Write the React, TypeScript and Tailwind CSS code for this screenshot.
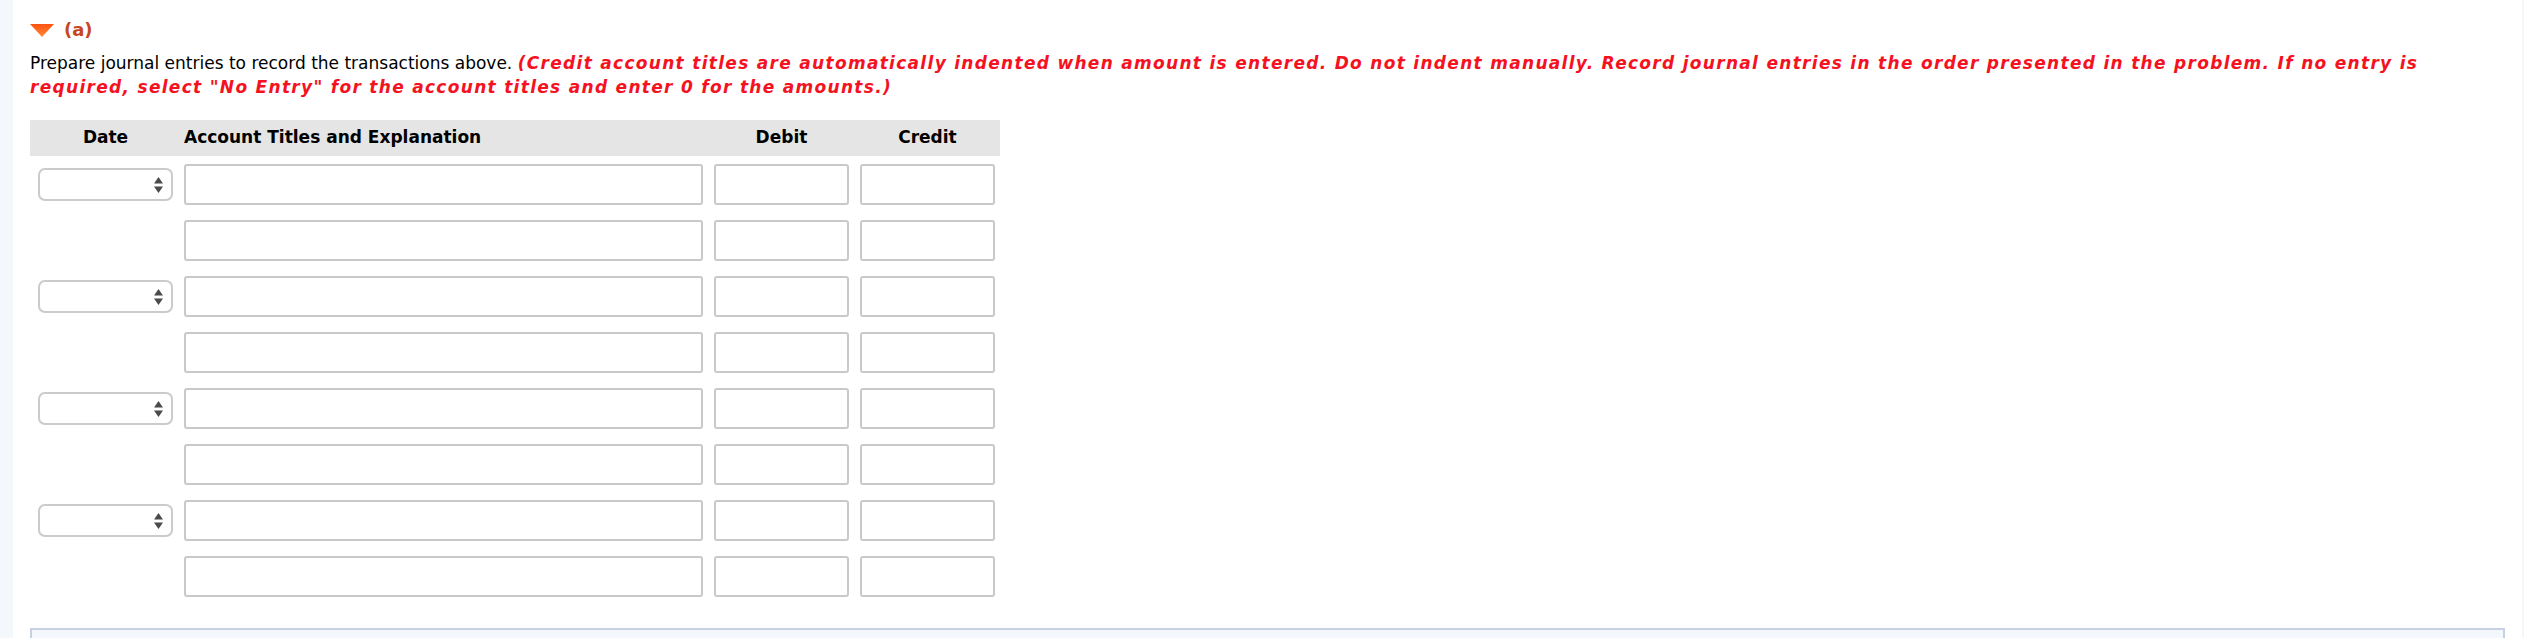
import React from 'react';

const font = { fontFamily: '"DejaVu Sans", Verdana, sans-serif' };

const DateSelect: React.FC = () => (
  <div className="w-[135px] h-[33px] bg-white border-2 border-[#cbcbcb] rounded-[7px] flex items-center justify-end pr-[8px]">
    <svg width="9" height="16" viewBox="0 0 9 16" aria-hidden="true">
      <path d="M0 6.5 L4.5 0 L9 6.5 Z" fill="#4a4a4a" />
      <path d="M0 9.5 L9 9.5 L4.5 16 Z" fill="#4a4a4a" />
    </svg>
  </div>
);

const Box: React.FC<{ w: string }> = ({ w }) => (
  <input
    type="text"
    className={`${w} h-[41px] bg-white border-2 border-[#c9c9c9] rounded-[3px] outline-none`}
  />
);

const EntryRow: React.FC<{ withDate: boolean }> = ({ withDate }) => (
  <div className="flex items-center gap-[11px] pl-[8px]">
    {withDate ? <DateSelect /> : <div className="w-[135px] h-[33px]" />}
    <Box w="w-[519px]" />
    <Box w="w-[135px]" />
    <Box w="w-[135px]" />
  </div>
);

const App: React.FC = () => {
  const rows = [true, false, true, false, true, false, true, false];

  return (
    <div className="h-[638px] overflow-hidden flex bg-[#f4f7fb] text-black" style={font}>
      <div className="flex-1 bg-white ml-[13px] mr-[2px] px-[17px] pt-[18px]">
        {/* section toggle */}
        <div className="flex items-center h-[24px]">
          <svg width="24" height="13" viewBox="0 0 24 13" aria-hidden="true">
            <defs>
              <linearGradient id="tri" x1="0" y1="0" x2="0" y2="1">
                <stop offset="0" stopColor="#ff5210" />
                <stop offset="1" stopColor="#ff8a3a" />
              </linearGradient>
            </defs>
            <path d="M0 0 L24 0 L12 13 Z" fill="url(#tri)" />
          </svg>
          <span className="ml-[10px] text-[18px] font-bold text-[#c8461e] leading-[24px]">(a)</span>
        </div>

        <p className="mt-[9px] text-[17px] leading-[24px]">
          Prepare journal entries to record the transactions above.{' '}
          <span className="font-bold italic text-[#f5121f] tracking-[1.3px]">
            (Credit account titles are automatically indented when amount is entered. Do not indent manually. Record journal entries in the order presented in the problem. If no entry is required, select "No Entry" for the account titles and enter 0 for the amounts.)
          </span>
        </p>

        {/* journal table */}
        <div className="mt-[21px] w-[970px]">
          <div className="flex items-center h-[36px] bg-[#e5e5e5] gap-[11px] pl-[8px] text-[17px] font-bold">
            <div className="w-[135px] text-center">Date</div>
            <div className="w-[519px] text-left">Account Titles and Explanation</div>
            <div className="w-[135px] text-center">Debit</div>
            <div className="w-[135px] text-center">Credit</div>
          </div>
          <div className="flex flex-col gap-[15px] pt-[8px]">
            {rows.map((d, i) => (
              <EntryRow key={i} withDate={d} />
            ))}
          </div>
        </div>

        <div className="mt-[31px] h-[40px] border-2 border-[#c8d1e1] bg-[#f4f8fc]" />
      </div>
    </div>
  );
};

export default App;
